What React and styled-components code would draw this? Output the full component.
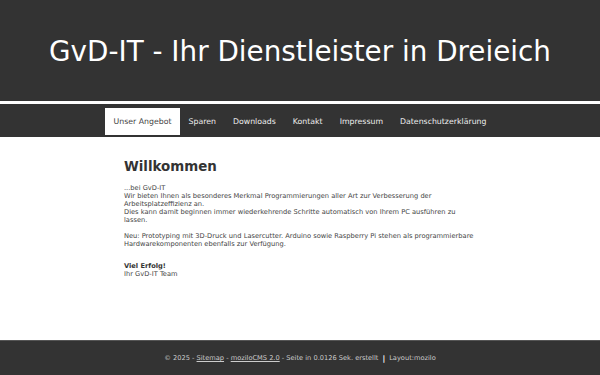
import React from 'react'
import styled, { createGlobalStyle } from 'styled-components'

const GlobalStyle = createGlobalStyle`
  html, body {
    margin: 0;
    padding: 0;
    background: #fff;
    font-family: "DejaVu Sans", Verdana, sans-serif;
  }
  #root {
    min-height: 100vh;
    display: flex;
    flex-direction: column;
  }
`

const Page = styled.div`
  flex: 1;
  display: flex;
  flex-direction: column;
`

const Header = styled.header`
  height: 101px;
  background: #333;
  display: flex;
  align-items: center;
  justify-content: center;
  border-bottom: 3px solid #fff;
`

const Title = styled.h1`
  margin: 0;
  padding-top: 2px;
  font-size: 27.8px;
  font-weight: 400;
  color: #fff;
`

const Nav = styled.nav`
  background: #333;
  padding: 4px 0 2px;
  display: flex;
  justify-content: center;
`

const NavItem = styled.a`
  height: 27px;
  padding: 0 8.5px;
  display: flex;
  align-items: center;
  font-size: 7.8px;
  color: ${p => (p.active ? '#444' : '#eee')};
  background: ${p => (p.active ? '#fff' : 'transparent')};
  text-decoration: none;
`

const Main = styled.main`
  flex: 1;
  width: 352px;
  margin: 0 auto;
  padding-top: 22px;
  color: #444;
  font-size: 6.68px;
  line-height: 8px;
`

const Heading = styled.h2`
  margin: 0 0 9px;
  font-size: 13.4px;
  line-height: 16px;
  font-weight: 700;
  color: #333;
`

const Para = styled.p`
  margin: 0 0 8px;
`

const Signature = styled.p`
  margin: 14px 0 0;
`

const Strong = styled.strong`
  color: #333;
`

const Footer = styled.footer`
  height: 34px;
  background: #333;
  border-top: 1px solid #555;
  display: flex;
  align-items: center;
  justify-content: center;
  color: #ccc;
  font-size: 6.65px;
`

const Link = styled.a`
  color: #ccc;
  text-decoration: underline;
`

const Pipe = styled.b`
  color: #fff;
  margin: 0 4px;
  font-size: 7.5px;
`

const items = ['Unser Angebot', 'Sparen', 'Downloads', 'Kontakt', 'Impressum', 'Datenschutzerklärung']

const App = () => {
  return (
    <Page>
      <GlobalStyle />
      <Header>
        <Title>GvD-IT - Ihr Dienstleister in Dreieich</Title>
      </Header>
      <Nav>
        {items.map((item, i) => (
          <NavItem key={item} href="#" active={i === 0 ? 1 : 0}>{item}</NavItem>
        ))}
      </Nav>
      <Main>
        <Heading>Willkommen</Heading>
        <Para>
          ...bei GvD-IT<br />
          Wir bieten Ihnen als besonderes Merkmal Programmierungen aller Art zur Verbesserung der Arbeitsplatzeffizienz an.<br />
          Dies kann damit beginnen immer wiederkehrende Schritte automatisch von Ihrem PC ausführen zu lassen.
        </Para>
        <Para>
          Neu: Prototyping mit 3D-Druck und Lasercutter. Arduino sowie Raspberry Pi stehen als programmierbare Hardwarekomponenten ebenfalls zur Verfügung.
        </Para>
        <Signature>
          <Strong>Viel Erfolg!</Strong><br />
          Ihr GvD-IT Team
        </Signature>
      </Main>
      <Footer>
        © 2025 -&nbsp;<Link href="#">Sitemap</Link>&nbsp;-&nbsp;<Link href="#">moziloCMS 2.0</Link>&nbsp;- Seite in 0.0126 Sek. erstellt
        <Pipe>|</Pipe>Layout:mozilo
      </Footer>
    </Page>
  )
}

export default App
